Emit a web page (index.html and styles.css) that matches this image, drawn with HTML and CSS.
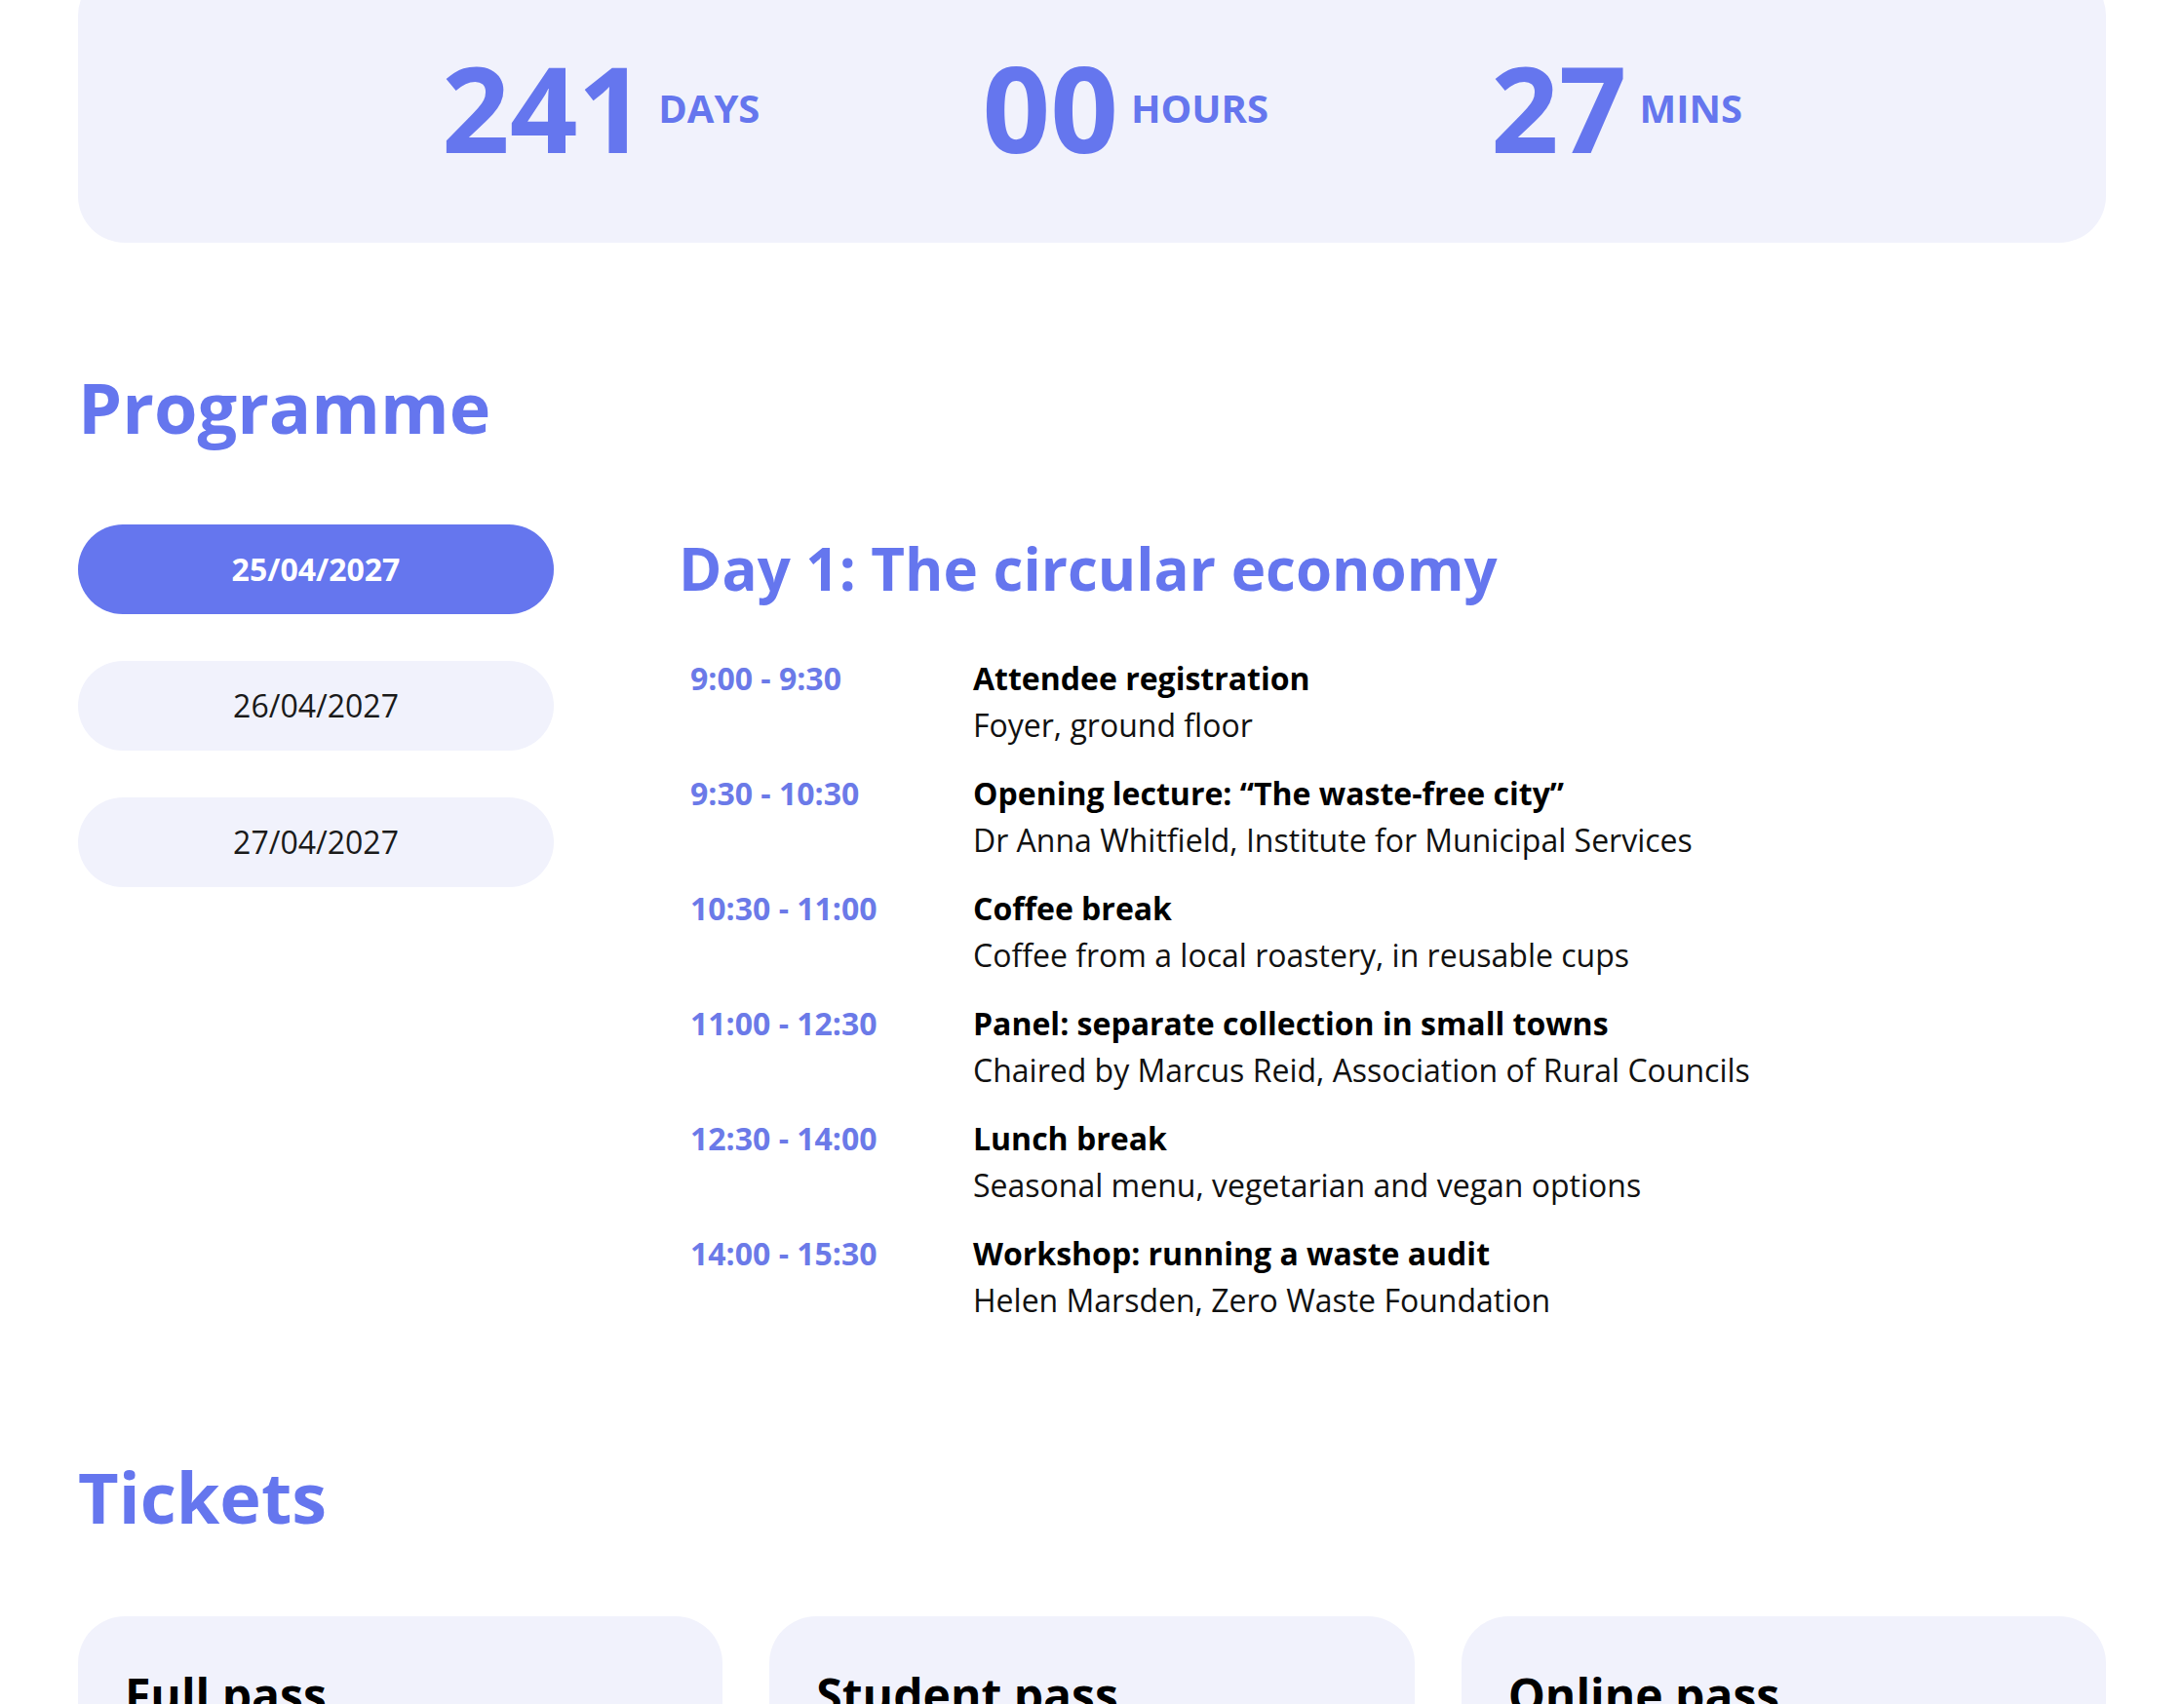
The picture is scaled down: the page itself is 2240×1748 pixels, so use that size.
FILE: index.html
```html
<!DOCTYPE html>
<html lang="en">
<head>
<meta charset="utf-8">
<title>Conference programme</title>
<link rel="stylesheet" href="styles.css">
</head>
<body>
<main class="page">
  <section class="countdown">
    <div class="cd-item"><span class="cd-num">241</span><span class="cd-label">DAYS</span></div>
    <div class="cd-item"><span class="cd-num">00</span><span class="cd-label">HOURS</span></div>
    <div class="cd-item"><span class="cd-num">27</span><span class="cd-label">MINS</span></div>
  </section>

  <section class="programme">
    <h2 class="section-title">Programme</h2>
    <div class="prog-grid">
      <nav class="days">
        <button class="day-pill is-active">25/04/2027</button>
        <button class="day-pill">26/04/2027</button>
        <button class="day-pill">27/04/2027</button>
      </nav>
      <div class="day-detail">
        <h3 class="day-title">Day 1: The circular economy</h3>
        <div class="schedule">
          <div class="slot">
            <div class="slot-time">9:00 - 9:30</div>
            <div class="slot-info">
              <div class="slot-title">Attendee registration</div>
              <div class="slot-desc">Foyer, ground floor</div>
            </div>
          </div>
          <div class="slot">
            <div class="slot-time">9:30 - 10:30</div>
            <div class="slot-info">
              <div class="slot-title">Opening lecture: “The waste-free city”</div>
              <div class="slot-desc">Dr Anna Whitfield, Institute for Municipal Services</div>
            </div>
          </div>
          <div class="slot">
            <div class="slot-time">10:30 - 11:00</div>
            <div class="slot-info">
              <div class="slot-title">Coffee break</div>
              <div class="slot-desc">Coffee from a local roastery, in reusable cups</div>
            </div>
          </div>
          <div class="slot">
            <div class="slot-time">11:00 - 12:30</div>
            <div class="slot-info">
              <div class="slot-title">Panel: separate collection in small towns</div>
              <div class="slot-desc">Chaired by Marcus Reid, Association of Rural Councils</div>
            </div>
          </div>
          <div class="slot">
            <div class="slot-time">12:30 - 14:00</div>
            <div class="slot-info">
              <div class="slot-title">Lunch break</div>
              <div class="slot-desc">Seasonal menu, vegetarian and vegan options</div>
            </div>
          </div>
          <div class="slot">
            <div class="slot-time">14:00 - 15:30</div>
            <div class="slot-info">
              <div class="slot-title">Workshop: running a waste audit</div>
              <div class="slot-desc">Helen Marsden, Zero Waste Foundation</div>
            </div>
          </div>
        </div>
      </div>
    </div>
  </section>

  <section class="tickets">
    <h2 class="section-title">Tickets</h2>
    <div class="ticket-grid">
      <article class="ticket-card">
        <h3 class="ticket-name">Full pass</h3>
        <p class="ticket-price">€240</p>
      </article>
      <article class="ticket-card">
        <h3 class="ticket-name">Student pass</h3>
        <p class="ticket-price">€90</p>
      </article>
      <article class="ticket-card">
        <h3 class="ticket-name">Online pass</h3>
        <p class="ticket-price">€60</p>
      </article>
    </div>
  </section>
</main>
</body>
</html>
```

FILE: styles.css
```css
html, body {
  margin: 0;
  padding: 0;
  background: #ffffff;
}

body {
  font-family: "Open Sans", "Noto Sans", sans-serif;
  color: #111111;
  overflow: hidden;
}

.page {
  padding: 0 80px;
}

/* Countdown */
.countdown {
  margin-top: -32px;
  padding: 59px 0 56px;
  background: #f1f2fc;
  border-radius: 48px;
  display: flex;
  justify-content: center;
  align-items: center;
  gap: 228px;
}

.cd-item {
  display: flex;
  align-items: center;
  gap: 13px;
  color: #6576ee;
}

.cd-num {
  font-size: 122px;
  font-weight: 700;
  line-height: normal;
}

.cd-label {
  font-size: 40px;
  font-weight: 700;
  line-height: normal;
}

/* Section headings */
.section-title {
  margin: 0 0 72px;
  font-size: 72px;
  font-weight: 700;
  line-height: normal;
  color: #6576ee;
}

.programme {
  margin-top: 119px;
}

.prog-grid {
  display: grid;
  grid-template-columns: 1fr 3fr;
  column-gap: 128px;
  align-items: start;
}

.days {
  display: flex;
  flex-direction: column;
  gap: 48px;
}

.day-pill {
  display: block;
  width: 100%;
  padding: 24px 16px;
  border: none;
  border-radius: 999px;
  background: #f1f2fc;
  font-family: "Open Sans", "Noto Sans", sans-serif;
  font-size: 32px;
  font-weight: 400;
  line-height: 44px;
  color: #1a1a1a;
  text-align: center;
}

.day-pill.is-active {
  background: #6576ee;
  color: #ffffff;
  font-weight: 700;
}

.day-title {
  margin: 4px 0 37px;
  font-size: 60px;
  font-weight: 700;
  line-height: normal;
  color: #6576ee;
}

.schedule {
  display: flex;
  flex-direction: column;
}

.slot {
  display: grid;
  grid-template-columns: 290px 1fr;
  font-size: 32px;
  line-height: 48px;
}

.slot-time,
.slot-info {
  padding: 11px 12px;
}

.slot-time {
  font-weight: 700;
  color: #6b7ae8;
}

.slot-title {
  font-weight: 700;
  color: #000000;
}

.slot-desc {
  font-weight: 400;
  color: #111111;
}

/* Tickets */
.tickets {
  margin-top: 117px;
}

.tickets .section-title {
  margin-bottom: 74px;
}

.ticket-grid {
  display: grid;
  grid-template-columns: repeat(3, 1fr);
  gap: 48px;
}

.ticket-card {
  min-height: 420px;
  padding: 48px;
  background: #f1f2fc;
  border-radius: 48px;
}

.ticket-name {
  margin: 0;
  font-size: 48px;
  font-weight: 700;
  line-height: normal;
  color: #000000;
}

.ticket-price {
  margin: 24px 0 0;
  font-size: 64px;
  font-weight: 700;
  color: #6576ee;
}
```
